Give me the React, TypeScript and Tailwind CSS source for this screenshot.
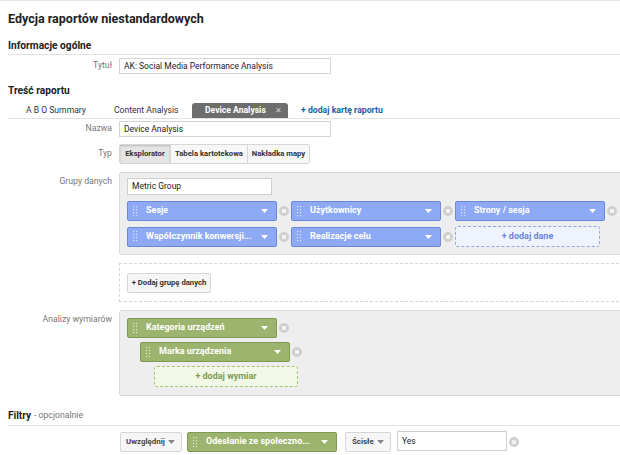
import type { ReactNode } from 'react'

function Grip() {
  return (
    <svg width="5" height="11" viewBox="0 0 5 11" className="shrink-0">
      {[0, 3, 6, 9].map((y) => (
        <g key={y}>
          <rect x="0" y={y} width="1.2" height="1.2" fill="rgba(255,255,255,0.7)" />
          <rect x="3" y={y} width="1.2" height="1.2" fill="rgba(255,255,255,0.7)" />
        </g>
      ))}
    </svg>
  )
}

function Caret({ color = '#fff' }: { color?: string }) {
  return (
    <svg width="7" height="4" viewBox="0 0 7 4" className="shrink-0">
      <path d="M0 0 L7 0 L3.5 4 Z" fill={color} />
    </svg>
  )
}

function Remove() {
  return (
    <span className="flex w-[14px] shrink-0 items-center justify-center">
      <svg width="10" height="10" viewBox="0 0 10 10">
        <circle cx="5" cy="5" r="5" fill="#cfcfcf" />
        <path d="M3.2 3.2 L6.8 6.8 M6.8 3.2 L3.2 6.8" stroke="#fff" strokeWidth="1.3" />
      </svg>
    </span>
  )
}

function Chip({ label, tone }: { label: string; tone: 'blue' | 'green' }) {
  const c =
    tone === 'blue'
      ? 'bg-[#8eaaf7] border-[#6b87d9]'
      : 'bg-[#9cb46d] border-[#7f9a52]'
  return (
    <div className={`flex h-[20px] w-[150px] shrink-0 items-center rounded-[2px] border pl-[5px] pr-[8px] ${c}`}>
      <Grip />
      <span className="ml-[8px] flex-1 truncate text-[9px] font-bold text-white">{label}</span>
      <Caret />
    </div>
  )
}

function Row({ label, children, top = false }: { label: string; children: ReactNode; top?: boolean }) {
  return (
    <div className={`flex ${top ? 'items-start' : 'items-center'}`}>
      <div className={`w-[112px] shrink-0 text-right text-[8.7px] text-[#777] ${top ? 'pt-[3px]' : ''}`}>{label}</div>
      <div className="ml-[7px] flex-1">{children}</div>
    </div>
  )
}

function Input({ value, w }: { value: string; w: string }) {
  return (
    <div className={`flex h-[16px] ${w} items-center border border-[#d4d4d4] bg-white px-[4px] text-[8.5px] text-[#222]`}>
      {value}
    </div>
  )
}

export default function App() {
  return (
    <div className="h-[455px] w-[620px] overflow-hidden bg-white text-[#222]" style={{ fontFamily: 'Roboto, "Liberation Sans", sans-serif' }}>
      <div className="h-px bg-[#e6e6e6]" />
      <div className="flex h-[36px] items-center pl-[8px] text-[12.5px] font-bold text-[#222]">Edycja raportów niestandardowych</div>

      <div className="ml-[8px] flex h-[18px] items-center border-b border-[#e2e2e2] text-[10.2px] font-bold">Informacje ogólne</div>
      <div className="mt-[3px]">
        <Row label="Tytuł">
          <Input value="AK: Social Media Performance Analysis" w="w-[212px]" />
        </Row>
      </div>

      <div className="ml-[8px] mt-[8px] flex h-[18px] items-center text-[10.2px] font-bold">Treść raportu</div>
      <div className="ml-[8px] mt-[3px] flex h-[16px] items-center border-b border-[#e2e2e2] text-[8.6px]">
        <span className="ml-[18px] w-[88px] text-[#333]">A B O Summary</span>
        <span className="w-[78px] text-[#333]">Content Analysis</span>
        <span className="flex h-[15px] w-[96px] items-center self-end rounded-t-[3px] bg-[#6d6d6d] pl-[13px] font-bold text-white">
          Device Analysis<span className="ml-[9px] text-[8px] font-normal text-[#cfcfcf]">✕</span>
        </span>
        <span className="ml-[13px] text-[8.7px] font-bold text-[#1a5fa8]">+ dodaj kartę raportu</span>
      </div>

      <div className="mt-[2px]">
        <Row label="Nazwa">
          <Input value="Device Analysis" w="w-[212px]" />
        </Row>
      </div>

      <div className="mt-[7px]">
        <Row label="Typ">
          <div className="flex h-[20px] w-fit rounded-[2px] border border-[#d6d6d6] text-[7.7px] font-bold text-[#333]">
            <span className="flex w-[50px] items-center justify-center bg-[#e4e4e4] shadow-[inset_0_1px_2px_rgba(0,0,0,0.18)]">Eksplorator</span>
            <span className="flex w-[77px] items-center justify-center border-l border-[#d6d6d6] bg-[#f7f7f7]">Tabela kartotekowa</span>
            <span className="flex w-[62px] items-center justify-center border-l border-[#d6d6d6] bg-[#f7f7f7]">Nakładka mapy</span>
          </div>
        </Row>
      </div>

      <div className="mt-[8px]">
        <Row label="Grupy danych" top>
          <div className="h-[83px] w-[520px] rounded-l-[3px] border border-[#d8d8d8] bg-[#eeeeee] pl-[7px] pt-[5px]">
            <div className="flex h-[17px] w-[145px] items-center border border-[#cfcfcf] bg-white px-[4px] text-[8.5px]">Metric Group</div>
            <div className="mt-[6px] flex items-center">
              <Chip label="Sesje" tone="blue" />
              <Remove />
              <Chip label="Użytkownicy" tone="blue" />
              <Remove />
              <Chip label="Strony / sesja" tone="blue" />
              <Remove />
            </div>
            <div className="mt-[5px] flex items-center">
              <Chip label="Współczynnik konwersji..." tone="blue" />
              <Remove />
              <Chip label="Realizacje celu" tone="blue" />
              <Remove />
              <div className="flex h-[21px] w-[145px] items-center justify-center rounded-[3px] border border-dashed border-[#8fa6ec] bg-[#eef3fe] text-[9px] font-bold text-[#6b87d9]">
                + dodaj dane
              </div>
            </div>
          </div>
          <div className="mt-[8px] flex h-[39px] w-[520px] items-center border border-dashed border-[#d4d4d4] pl-[7px]">
            <div className="flex h-[20px] w-[84px] items-center justify-center whitespace-nowrap rounded-[2px] border border-[#d6d6d6] bg-[#f6f6f6] text-[7.7px] font-bold text-[#333]">
              + Dodaj grupę danych
            </div>
          </div>
        </Row>
      </div>

      <div className="mt-[8px]">
        <Row label="Analizy wymiarów" top>
          <div className="h-[86px] w-[520px] rounded-l-[3px] border border-[#d8d8d8] bg-[#eeeeee] pl-[7px] pt-[7px]">
            <div className="flex items-center">
              <Chip label="Kategoria urządzeń" tone="green" />
              <Remove />
            </div>
            <div className="ml-[13px] mt-[4px] flex items-center">
              <Chip label="Marka urządzenia" tone="green" />
              <Remove />
            </div>
            <div className="ml-[27px] mt-[4px] flex h-[21px] w-[144px] items-center justify-center rounded-[3px] border border-dashed border-[#a9c27a] bg-[#f2f9e6] text-[9px] font-bold text-[#7f9a52]">
              + dodaj wymiar
            </div>
          </div>
        </Row>
      </div>

      <div className="ml-[8px] mt-[10px] flex h-[20px] items-center border-b border-[#e2e2e2] text-[10px]">
        <span className="font-bold">Filtry</span>
        <span className="ml-[3px] text-[8.7px] text-[#777]">- opcjonalnie</span>
      </div>

      <div className="ml-[120px] mt-[6px] flex items-center">
        <div className="flex h-[20px] w-[62px] items-center justify-between whitespace-nowrap rounded-[2px] border border-[#d6d6d6] bg-[#f6f6f6] pl-[5px] pr-[6px] text-[7.9px] font-bold text-[#444]">
          Uwzględnij <Caret color="#888" />
        </div>
        <div className="ml-[5px]">
          <Chip label="Odesłanie ze społeczno..." tone="green" />
        </div>
        <div className="ml-[8px] flex h-[20px] w-[46px] items-center justify-between rounded-[2px] border border-[#d6d6d6] bg-[#f6f6f6] pl-[6px] pr-[6px] text-[7.9px] font-bold text-[#444]">
          Ścisłe <Caret color="#888" />
        </div>
        <div className="-mt-[3px] ml-[6px] flex h-[20px] w-[110px] items-start border border-[#cfcfcf] bg-white px-[4px] pt-[3px] text-[8.5px]">Yes</div>
        <Remove />
      </div>
    </div>
  )
}
